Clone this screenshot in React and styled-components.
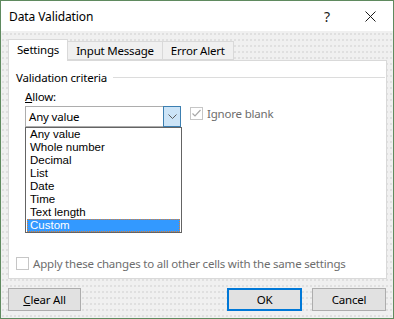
import styled, { createGlobalStyle } from "styled-components";

const GlobalStyle = createGlobalStyle`
  * { box-sizing: border-box; }
  html, body { margin: 0; padding: 0; background: #ffffff; }
  body {
    font-family: "Noto Sans", "Open Sans", sans-serif;
    font-size: 11.5px;
    letter-spacing: -0.2px;
    color: #000;
  }
`;

const items = ["Any value", "Whole number", "Decimal", "List", "Date", "Time", "Text length", "Custom"];

export default function App() {
  return (
    <>
      <GlobalStyle />
      <Window>
        <TitleBar>
          <Title>Data Validation</Title>
          <TitleButtons>
            <TitleButton>?</TitleButton>
            <TitleButton>
              <svg width="11" height="11" viewBox="0 0 11 11">
                <path d="M0.5 0.5 L10.5 10.5 M10.5 0.5 L0.5 10.5" stroke="#1a1a1a" strokeWidth="1" />
              </svg>
            </TitleButton>
          </TitleButtons>
        </TitleBar>
        <Body>
          <Tabs>
            <Tab $active>Settings</Tab>
            <Tab>Input Message</Tab>
            <Tab>Error Alert</Tab>
          </Tabs>
          <Panel>
            <GroupHeader>
              <span>Validation criteria</span>
              <GroupLine />
            </GroupHeader>
            <CriteriaRow>
              <Field>
                <FieldLabel>
                  <u>A</u>llow:
                </FieldLabel>
                <Combo>
                  <ComboValue>Any value</ComboValue>
                  <ComboButton>
                    <svg width="9" height="5" viewBox="0 0 9 5">
                      <path d="M0.5 0.5 L4.5 4.5 L8.5 0.5" fill="none" stroke="#5c5c5c" strokeWidth="1" />
                    </svg>
                  </ComboButton>
                  <DropList>
                    {items.map((it) => (
                      <DropItem key={it} $selected={it === "Custom"}>
                        {it}
                      </DropItem>
                    ))}
                  </DropList>
                </Combo>
              </Field>
              <IgnoreBlank>
                <CheckRow $disabled>
                  <CheckBox $disabled>
                    <svg width="11" height="11" viewBox="0 0 11 11">
                      <path d="M1.5 5.5 L4 8 L9.5 2" fill="none" stroke="#a8a8a8" strokeWidth="1.2" />
                    </svg>
                  </CheckBox>
                  Ignore blank
                </CheckRow>
              </IgnoreBlank>
            </CriteriaRow>
            <ApplyRow>
              <CheckRow $disabled>
                <CheckBox $disabled />
                Apply these changes to all other cells with the same settings
              </CheckRow>
            </ApplyRow>
          </Panel>
          <Footer>
            <Button $width={73}>
              <u>C</u>lear All
            </Button>
            <FooterRight>
              <Button $width={75} $default>
                OK
              </Button>
              <Button $width={74}>Cancel</Button>
            </FooterRight>
          </Footer>
        </Body>
      </Window>
    </>
  );
}

const Window = styled.div`
  width: 394px;
  height: 319px;
  border: 1px solid #5f8a5f;
  display: flex;
  flex-direction: column;
  background: #f0f0f0;
`;

const TitleBar = styled.div`
  height: 30px;
  background: #ffffff;
  display: flex;
  align-items: center;
  justify-content: space-between;
  padding-left: 8px;
`;

const Title = styled.div`
  font-size: 12px;
  letter-spacing: -0.1px;
  color: #000;
  margin-top: 1px;
`;

const TitleButtons = styled.div`
  display: flex;
  height: 100%;
`;

const TitleButton = styled.div`
  width: 46px;
  height: 100%;
  display: flex;
  align-items: center;
  justify-content: center;
  font-size: 14px;
  color: #1a1a1a;
  &:first-child {
    padding-left: 6px;
  }
`;

const Body = styled.div`
  flex: 1;
  display: flex;
  flex-direction: column;
  padding: 8px 6px 0 7px;
  background-color: #f0f0f0;
  background-image: radial-gradient(circle, #d6d6d6 0.6px, transparent 0.9px);
  background-size: 4px 6px;
`;

const Tabs = styled.div`
  display: flex;
  align-items: flex-end;
  height: 21px;
  position: relative;
  z-index: 1;
`;

const Tab = styled.div`
  height: ${(p) => (p.$active ? "22px" : "19px")};
  margin-bottom: ${(p) => (p.$active ? "-1px" : "0")};
  padding: 0 8px;
  padding-bottom: ${(p) => (p.$active ? "2px" : "0")};
  display: flex;
  align-items: center;
  background: ${(p) => (p.$active ? "#ffffff" : "#f0f0f0")};
  border: 1px solid #d9d9d9;
  border-bottom: ${(p) => (p.$active ? "none" : "1px solid #d9d9d9")};
  margin-right: -1px;
`;

const Panel = styled.div`
  height: 219px;
  background: #ffffff;
  border: 1px solid #d9d9d9;
  display: flex;
  flex-direction: column;
  padding: 8px 0 0 7px;
`;

const GroupHeader = styled.div`
  display: flex;
  align-items: center;
  gap: 6px;
  height: 16px;
  padding-right: 1px;
`;

const GroupLine = styled.div`
  flex: 1;
  height: 1px;
  background: #dcdcdc;
`;

const CriteriaRow = styled.div`
  display: flex;
  align-items: flex-start;
  gap: 9px;
  padding-left: 9px;
  margin-top: 3px;
`;

const Field = styled.div`
  display: flex;
  flex-direction: column;
  width: 156px;
`;

const FieldLabel = styled.div`
  height: 16px;
  display: flex;
  align-items: center;
  margin-bottom: 2px;
`;

const Combo = styled.div`
  position: relative;
  height: 21px;
  border: 1px solid #adadad;
  display: flex;
  align-items: stretch;
  background: #ffffff;
`;

const ComboValue = styled.div`
  flex: 1;
  display: flex;
  align-items: center;
  padding-left: 3px;
`;

const ComboButton = styled.div`
  width: 18px;
  margin: -1px -1px -1px 0;
  background: #cce4f7;
  border: 1px solid #3c7fb1;
  display: flex;
  align-items: center;
  justify-content: center;
`;

const DropList = styled.div`
  position: absolute;
  left: -1px;
  top: 20px;
  width: 157px;
  border: 1px solid #646464;
  background: #ffffff;
`;

const DropItem = styled.div`
  height: 13px;
  line-height: 13px;
  font-family: "Liberation Sans", Arial, sans-serif;
  font-size: 11.5px;
  letter-spacing: 0;
  padding-left: 3px;
  margin: 0 1px;
  background: ${(p) => (p.$selected ? "#3399ff" : "transparent")};
  color: ${(p) => (p.$selected ? "#ffffff" : "#000000")};
  outline: ${(p) => (p.$selected ? "1px dotted #e08030" : "none")};
  outline-offset: -1px;
`;

const IgnoreBlank = styled.div`
  margin-top: 17px;
`;

const CheckRow = styled.div`
  display: flex;
  align-items: center;
  gap: 4px;
  color: ${(p) => (p.$disabled ? "#6d6d6d" : "#000")};
  height: 16px;
`;

const CheckBox = styled.div`
  width: 13px;
  height: 13px;
  border: 1px solid ${(p) => (p.$disabled ? "#c6c6c6" : "#333")};
  background: #ffffff;
  display: flex;
  align-items: center;
  justify-content: center;
`;

const ApplyRow = styled.div`
  margin-top: auto;
  margin-bottom: 7px;
`;

const Footer = styled.div`
  display: flex;
  justify-content: space-between;
  margin-top: 9px;
  padding-right: 1px;
`;

const FooterRight = styled.div`
  display: flex;
  gap: 10px;
`;

const Button = styled.div`
  width: ${(p) => p.$width}px;
  height: 23px;
  background: #e1e1e1;
  border: ${(p) => (p.$default ? "2px solid #0078d7" : "1px solid #adadad")};
  display: flex;
  align-items: center;
  justify-content: center;
`;
